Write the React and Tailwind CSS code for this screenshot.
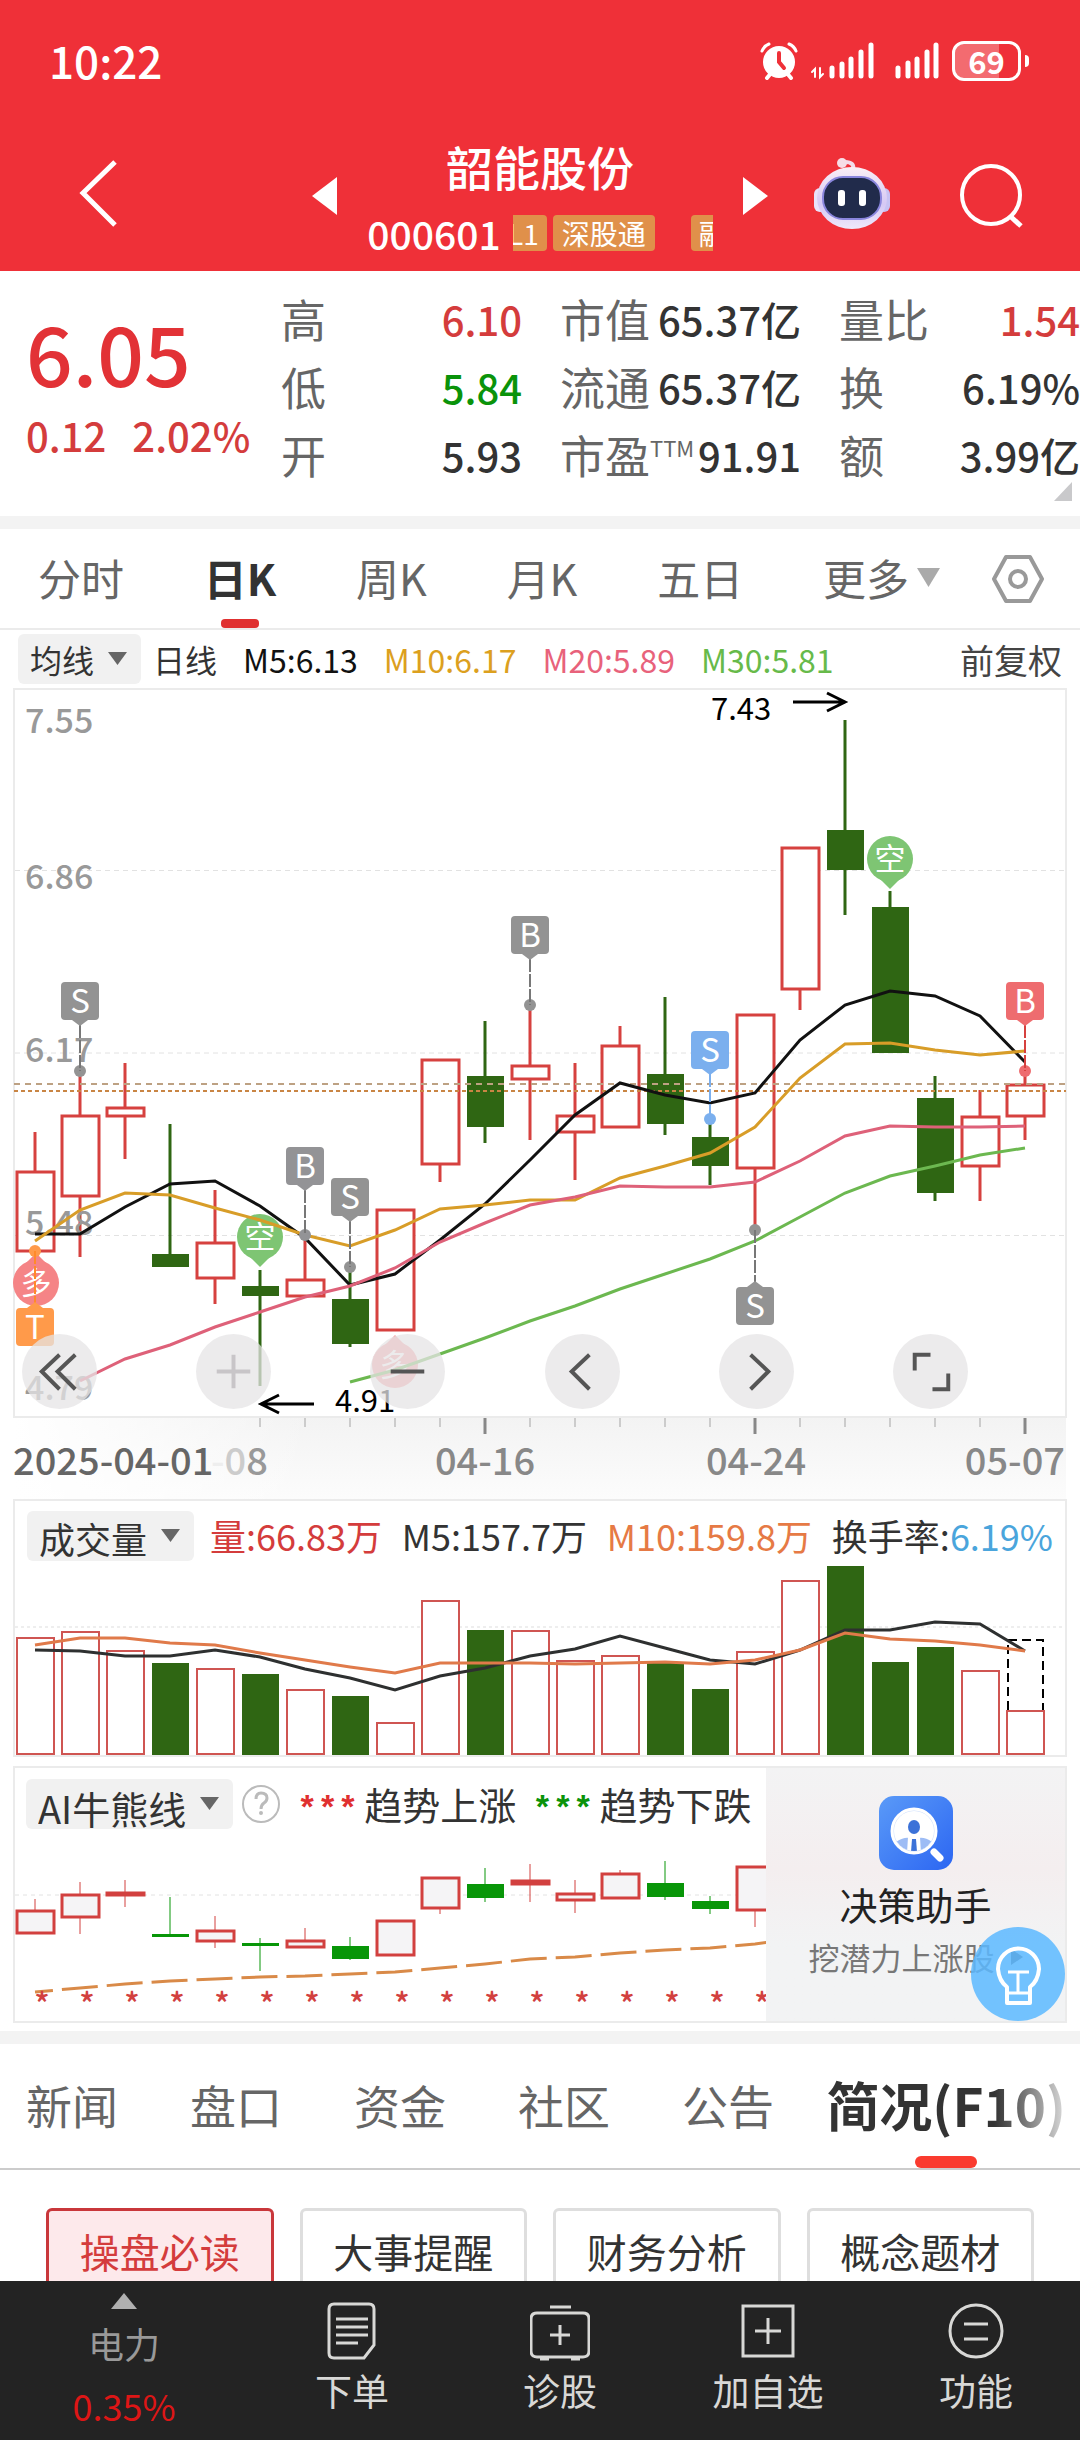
import { useState } from "react";

// x of the candle with index i, shared by the three charts
const cx = (i) => 35 + i * 45;
const points = (ys, from = 0) => ys.map((y, i) => `${cx(i + from)},${y}`).join(" ");

// [up, high, top, bottom, low]
const candles = [
  [1, 1132, 1172, 1251, 1251],
  [1, 1071, 1116, 1196, 1257],
  [1, 1063, 1108, 1116, 1159],
  [0, 1124, 1254, 1267, 1267],
  [1, 1190, 1243, 1278, 1304],
  [0, 1270, 1286, 1296, 1386],
  [1, 1236, 1280, 1296, 1296],
  [0, 1267, 1299, 1344, 1347],
  [1, 1210, 1210, 1330, 1330],
  [1, 1060, 1060, 1164, 1182],
  [0, 1021, 1076, 1127, 1143],
  [1, 1005, 1066, 1079, 1140],
  [1, 1063, 1116, 1132, 1180],
  [1, 1026, 1046, 1127, 1127],
  [0, 997, 1074, 1124, 1135],
  [0, 1119, 1137, 1166, 1185],
  [1, 1015, 1015, 1168, 1230],
  [1, 848, 848, 989, 1010],
  [0, 720, 830, 870, 915],
  [0, 891, 907, 1053, 1053],
  [0, 1076, 1098, 1193, 1201],
  [1, 1090, 1117, 1166, 1201],
  [1, 1071, 1085, 1116, 1140],
];

const ma5 = [1234, 1234, 1207, 1184, 1181, 1206, 1238, 1285, 1274, 1240, 1204, 1160, 1115, 1083, 1095, 1103, 1093, 1040, 1005, 991, 996, 1016, 1062];
const ma10 = [1241, 1210, 1193, 1195, 1208, 1220, 1235, 1246, 1230, 1209, 1205, 1200, 1200, 1178, 1166, 1153, 1127, 1078, 1044, 1043, 1050, 1055, 1051];
const ma20 = [1381, 1359, 1345, 1327, 1312, 1297, 1286, 1268, 1242, 1223, 1205, 1197, 1186, 1187, 1187, 1182, 1161, 1136, 1126, 1127, 1127, 1126];
const ma30 = [1382, 1370, 1354, 1338, 1321, 1306, 1289, 1274, 1259, 1241, 1217, 1193, 1176, 1166, 1155, 1148];

// [up, top]
const volumes = [
  [1, 1638], [1, 1632], [1, 1651], [0, 1663], [1, 1669], [0, 1674], [1, 1690], [0, 1696],
  [1, 1723], [1, 1601], [0, 1630], [1, 1631], [1, 1661], [1, 1656], [0, 1663], [0, 1689],
  [1, 1652], [1, 1581], [0, 1566], [0, 1662], [0, 1647], [1, 1671], [1, 1711],
];
const vol5 = [1650, 1651, 1656, 1656, 1650, 1657, 1669, 1678, 1690, 1676, 1668, 1656, 1649, 1636, 1648, 1660, 1664, 1650, 1630, 1630, 1622, 1624, 1651];
const vol10 = [1645, 1638, 1638, 1643, 1645, 1653, 1660, 1667, 1673, 1663, 1663, 1663, 1664, 1663, 1662, 1664, 1660, 1650, 1633, 1639, 1641, 1645, 1651];

const trend = [
  [1, 1899, 1911, 1933, 1933],
  [1, 1882, 1895, 1917, 1934],
  [1, 1880, 1893, 1895, 1907],
  [0, 1897, 1934, 1937, 1937],
  [1, 1916, 1931, 1941, 1948],
  [0, 1938, 1943, 1946, 1971],
  [1, 1928, 1941, 1947, 1947],
  [0, 1937, 1946, 1959, 1960],
  [1, 1921, 1921, 1955, 1955],
  [1, 1878, 1878, 1908, 1914],
  [0, 1868, 1884, 1898, 1902],
  [1, 1864, 1881, 1884, 1902],
  [1, 1880, 1894, 1900, 1913],
  [1, 1870, 1874, 1898, 1898],
  [0, 1861, 1883, 1897, 1900],
  [0, 1896, 1901, 1909, 1914],
  [1, 1867, 1867, 1910, 1927],
];
const trendLine = [1992, 1988, 1984, 1981, 1979, 1977, 1976, 1974, 1972, 1968, 1964, 1959, 1957, 1953, 1950, 1948, 1944, 1938];

const quotes = [
  [
    { label: "高", value: "6.10", color: "text-[#d43c3c]" },
    { label: "低", value: "5.84", color: "text-[#0a930a]" },
    { label: "开", value: "5.93", color: "text-[#333]" },
  ],
  [
    { label: "市值", value: "65.37亿", color: "text-[#333]" },
    { label: "流通", value: "65.37亿", color: "text-[#333]" },
    { label: "市盈", sup: "TTM", value: "91.91", color: "text-[#333]" },
  ],
  [
    { label: "量比", value: "1.54", color: "text-[#d43c3c]" },
    { label: "换", value: "6.19%", color: "text-[#333]" },
    { label: "额", value: "3.99亿", color: "text-[#333]" },
  ],
];

function Caret({ className }) {
  return (
    <svg viewBox="0 0 20 18" preserveAspectRatio="none" className={className} aria-hidden="true">
      <path d="M0 0h20L10 18z" fill="currentColor" />
    </svg>
  );
}

function PillSelect({ label, value, className }) {
  return (
    <div className="relative shrink-0">
      <select
        aria-label={label}
        className={`block h-[50px] appearance-none rounded-md bg-[#f1f1f1] pl-3 pr-[46px] text-[#333] ${className}`}
      >
        <option>{value}</option>
      </select>
      <Caret className="pointer-events-none absolute right-[14px] top-[18px] h-[13px] w-[19px] text-[#666]" />
    </div>
  );
}

function StatusBar() {
  return (
    <div className="flex h-16 items-center justify-between pl-[49px] pr-[51px]">
      <span className="text-[44px] font-medium leading-[62px]">10:22</span>
      <div className="flex items-center pt-[2px]">
        <svg viewBox="0 0 38 38" className="mr-3 h-[38px] w-[38px]" fill="none">
          <circle cx="19" cy="20" r="16" fill="#fff" />
          <path d="M7 36l5-6M31 36l-5-6" stroke="#fff" strokeWidth="4" strokeLinecap="round" />
          <path d="M2 9q2-5 7-7M36 9q-2-5-7-7" stroke="#fff" strokeWidth="3" strokeLinecap="round" />
          <path d="M19 11v9l5 6" stroke="#ef3038" strokeWidth="4" strokeLinecap="round" />
        </svg>
        <svg viewBox="0 0 64 38" className="mr-5 h-[38px] w-16" fill="none" stroke="#fff" strokeLinecap="round">
          <path d="M5 35V27l-3 3M10 26v9l3-3" strokeWidth="2" />
          <path d="M22 34v-8M32 34V22M41 34V17M51 34V10M61 34V3" strokeWidth="5" />
        </svg>
        <svg viewBox="0 0 46 38" className="mr-3 h-[38px] w-[46px]" fill="none" stroke="#fff" strokeLinecap="round">
          <path d="M4 34v-8M14 34V21M23 34V17M33 34V10M42 34V3" strokeWidth="5" />
        </svg>
        <div className="flex items-center">
          <div className="flex h-10 w-[69px] items-center justify-center rounded-xl border-[3px] border-white bg-linear-to-r from-[#f36b70] from-70% to-[#ef3038] to-70% text-[31px] font-bold leading-8">
            69
          </div>
          <div className="ml-1 h-3 w-1 rounded-r bg-white" />
        </div>
      </div>
    </div>
  );
}

function Robot() {
  return (
    <svg viewBox="0 0 76 72" className="h-[72px] w-[76px]">
      <defs>
        <linearGradient id="shell" x1="0" y1="0" x2="0" y2="1">
          <stop offset="0" stopColor="#fbeff6" />
          <stop offset="0.6" stopColor="#d5c8f4" />
          <stop offset="1" stopColor="#efe9fb" />
        </linearGradient>
      </defs>
      <path d="M39 12q2-8-8-8" fill="none" stroke="#f3dcea" strokeWidth="4" strokeLinecap="round" />
      <circle cx="28" cy="5" r="5" fill="#f7dde6" />
      <rect x="0" y="30" width="12" height="24" rx="6" fill="#e9e2fa" />
      <rect x="64" y="30" width="12" height="24" rx="6" fill="#c7c2f3" />
      <ellipse cx="38" cy="40" rx="35" ry="31" fill="url(#shell)" />
      <rect x="9" y="19" width="58" height="42" rx="20" fill="#212b4b" stroke="#8a86dd" strokeWidth="2" />
      <rect x="24" y="32" width="7" height="16" rx="3" fill="#fff" />
      <rect x="45" y="32" width="7" height="16" rx="3" fill="#fff" />
    </svg>
  );
}

function Header() {
  return (
    <header className="bg-[#ef3038] pb-[7px] pt-7 text-white">
      <StatusBar />
      <div className="mt-9 grid h-[136px] grid-cols-[1fr_auto_1fr] items-center">
        <div className="pl-[78px]">
          <button aria-label="返回" className="block pb-1">
            <svg viewBox="0 0 40 68" className="h-[68px] w-10" fill="none" stroke="#fff" strokeWidth="5">
              <path d="M37 2L5 33l32 32" />
            </svg>
          </button>
        </div>
        <div className="flex w-[456px] items-center justify-between">
          <button aria-label="上一只">
            <svg viewBox="0 0 25 38" className="h-[38px] w-[25px]"><path d="M25 0v38L0 19z" fill="#fff" /></svg>
          </button>
          <div className="flex flex-col items-center gap-[22px] pb-[2px]">
            <h1 className="text-[47px] font-medium leading-[54px]">韶能股份</h1>
            <div className="flex h-9 items-center gap-3">
              <span className="text-[39px] font-medium leading-9">000601</span>
              <div className="flex w-[200px] justify-end overflow-hidden text-[28px] leading-9">
                <span className="mr-[6px] shrink-0 rounded-sm bg-[#e0904a] px-2">L1</span>
                <span className="mr-9 shrink-0 rounded-sm bg-[#e0904a] px-[9px]">深股通</span>
                <span className="w-[22px] shrink-0 overflow-hidden whitespace-nowrap rounded-l-sm bg-[#e0904a] pl-2">融</span>
              </div>
            </div>
          </div>
          <button aria-label="下一只">
            <svg viewBox="0 0 25 38" className="h-[38px] w-[25px]"><path d="M0 0v38l25-19z" fill="#fff" /></svg>
          </button>
        </div>
        <div className="flex items-center justify-end gap-[70px] pr-14">
          <button aria-label="智能助手" className="pb-1"><Robot /></button>
          <button aria-label="搜索">
            <svg viewBox="0 0 64 64" className="h-16 w-16" fill="none" stroke="#fff" strokeWidth="4">
              <circle cx="31" cy="31" r="29" />
              <path d="M50 52l11 10" strokeWidth="5" />
            </svg>
          </button>
        </div>
      </div>
    </header>
  );
}

function Quote() {
  return (
    <section className="relative flex h-[245px] pt-[14px]">
      <div className="w-[281px] shrink-0 pl-[26px] font-medium">
        <div className="pt-5 text-[82px] leading-[94px] text-[#e23236]">6.05</div>
        <div className="flex gap-[26px] pt-[10px] text-[40px] leading-[52px] text-[#d43c3c]">
          <span>0.12</span>
          <span>2.02%</span>
        </div>
      </div>
      <div className="grid flex-1 grid-cols-3 gap-[38px]">
        {quotes.map((col, i) => (
          <dl key={i}>
            {col.map((q) => (
              <div key={q.label} className="flex h-[68px] items-center justify-between whitespace-nowrap">
                <dt className="flex text-[45px] leading-[68px] text-[#666]">
                  {q.label}
                  {q.sup && <span className="text-[22px] leading-[52px]">{q.sup}</span>}
                </dt>
                <dd className={`text-[40px] font-medium leading-[68px] ${q.color}`}>{q.value}</dd>
              </div>
            ))}
          </dl>
        ))}
      </div>
      <svg viewBox="0 0 18 19" className="absolute bottom-[15px] right-2 h-[19px] w-[18px]">
        <path d="M18 0v19H0z" fill="#c9c9cb" />
      </svg>
    </section>
  );
}

function PeriodTabs() {
  const [active, setActive] = useState("日K");
  return (
    <nav className="flex h-[101px] items-center border-b-2 border-[#ebebeb] pl-[38px] pr-9">
      <div className="mr-[52px] flex flex-1 justify-between self-stretch text-[43px]">
        {["分时", "日K", "周K", "月K", "五日"].map((t) => (
          <button
            key={t}
            onClick={() => setActive(t)}
            className={`relative pb-[2px] leading-[97px] ${active === t ? "font-bold text-[#333]" : "text-[#666]"}`}
          >
            {t}
            {active === t && (
              <span className="absolute bottom-0 left-1/2 h-[9px] w-[38px] -translate-x-1/2 rounded bg-[#e03030]" />
            )}
          </button>
        ))}
        <button className="flex items-center gap-2 pb-[2px] leading-[97px] text-[#666]">
          更多
          <Caret className="h-[19px] w-[23px] text-[#aaa]" />
        </button>
      </div>
      <button aria-label="设置">
        <svg viewBox="0 0 52 48" className="h-12 w-[52px]" fill="none" stroke="#999" strokeWidth="4" strokeLinejoin="round">
          <path d="M14 2h24l12 22-12 22H14L2 24z" />
          <circle cx="26" cy="24" r="8" />
        </svg>
      </button>
    </nav>
  );
}

function Candle({ i, data, up, down, fill = "#fff", wick = 3 }) {
  const [rise, high, top, bottom, low] = data;
  const color = rise ? up : down;
  return (
    <g>
      <path d={`M${cx(i)} ${high}V${top}M${cx(i)} ${bottom}V${low}`} stroke={color} strokeWidth={wick} />
      {rise ? (
        <rect x={cx(i) - 18} y={top} width="37" height={bottom - top} fill={fill} stroke={color} strokeWidth="3" />
      ) : (
        <rect x={cx(i) - 18} y={top} width="37" height={bottom - top} fill={color} />
      )}
    </g>
  );
}

// square B/S/T flag joined to a dot at the candle's high or low
function Flag({ i, letter, y, dot, color, below, line = "#777" }) {
  const x = cx(i);
  return (
    <g>
      <circle cx={x} cy={dot} r="6" fill={color} />
      <path d={below ? `M${x} ${dot}V${y - 5}` : `M${x} ${y + 43}V${dot}`} stroke={line} strokeWidth="2" strokeDasharray="13 2" />
      <rect x={x - 19} y={y} width="38" height="38" rx="4" fill={color} />
      <path d={below ? `M${x - 8} ${y}l8 -6 8 6z` : `M${x - 8} ${y + 38}l8 6 8 -6z`} fill={color} />
      <text x={x} y={y + 31} textAnchor="middle" fontSize="33" fill="#fff">{letter}</text>
    </g>
  );
}

function Balloon({ x, y, text, color, up, opacity = 1 }) {
  return (
    <g opacity={opacity}>
      <circle cx={x} cy={y} r="23" fill={color} />
      <path d={up ? `M${x - 11} ${y - 19}L${x} ${y - 30}l11 11z` : `M${x - 11} ${y + 19}L${x} ${y + 30}l11 -11z`} fill={color} />
      <text x={x} y={y + 11} textAnchor="middle" fontSize="31" fill="#fff">{text}</text>
    </g>
  );
}

function PriceChart() {
  return (
    <svg viewBox="0 688 1080 811" className="block w-full" role="img" aria-label="日K线">
      <defs>
        <linearGradient id="axis" x1="0" y1="0" x2="0" y2="1">
          <stop offset="0" stopColor="#f3f3f3" />
          <stop offset="1" stopColor="#fcfcfc" />
        </linearGradient>
        <linearGradient id="axisLeft" x1="0" y1="0" x2="1" y2="0">
          <stop offset="0" stopColor="#fff" />
          <stop offset="1" stopColor="#fff" stopOpacity="0" />
        </linearGradient>
      </defs>
      <rect x="14" y="1417" width="1052" height="82" fill="url(#axis)" />
      <rect x="14" y="1417" width="300" height="82" fill="url(#axisLeft)" />
      <rect x="14" y="689" width="1052" height="728" fill="#fff" stroke="#ebebeb" strokeWidth="2" />
      <path d="M15 870.5H1065M15 1053H1065M15 1235.5H1065" stroke="#e2e2e2" strokeDasharray="5 4" />

      {candles.map((c, i) => (
        <Candle key={i} i={i} data={c} up="#d6413f" down="#2f6613" />
      ))}
      <path d="M14 1084H1066" stroke="#bda183" strokeWidth="2" strokeDasharray="6 5" />
      <path d="M14 1091H1066" stroke="#c98544" strokeWidth="2" strokeDasharray="4 3" />

      <g fontSize="34" fontWeight="500" fill="#999">
        <text x="25" y="733">7.55</text>
        <text x="25" y="889">6.86</text>
        <text x="25" y="1062">6.17</text>
        <text x="25" y="1235">5.48</text>
        <text x="25" y="1400">4.79</text>
      </g>

      <Balloon x={36} y={1283} text="多" color="#f58486" up />
      <Balloon x={260} y={1237} text="空" color="#7ec573" />
      <Balloon x={395} y={1365} text="多" color="#f58486" up opacity={0.8} />
      <Balloon x={890} y={859} text="空" color="#7ec573" />

      <g fill="none" strokeWidth="3">
        <polyline points={points(ma5)} stroke="#111" />
        <polyline points={points(ma10)} stroke="#d89d28" />
        <polyline points={points(ma20, 1)} stroke="#de6179" />
        <polyline points={points(ma30, 7)} stroke="#6cb850" />
      </g>

      <Flag i={1} letter="S" y={982} dot={1071} color="#939393" />
      <Flag i={6} letter="B" y={1147} dot={1235} color="#939396" />
      <Flag i={7} letter="S" y={1178} dot={1267} color="#939393" />
      <Flag i={11} letter="B" y={916} dot={1005} color="#939393" />
      <Flag i={15} letter="S" y={1031} dot={1119} color="#7bafee" line="#7bafee" />
      <Flag i={16} letter="S" y={1287} dot={1230} color="#939393" below />
      <Flag i={22} letter="B" y={982} dot={1071} color="#ee6c6f" line="#d6413f" />
      <Flag i={0} letter="T" y={1308} dot={1251} color="#ff9a4a" line="#ff8a2a" below />

      <g fill="none" stroke="#000" strokeWidth="3">
        <path d="M793 702h52M827 693l18 9-18 9" />
        <path d="M314 1404h-53M279 1395l-18 9 18 9" />
      </g>
      <text x="711" y="720" fontSize="31">7.43</text>
      <text x="335" y="1412" fontSize="31">4.91</text>

      {candles.map((c, i) =>
        i < 5 ? null : i === 10 || i === 16 || i === 22 ? (
          <path key={i} d={`M${cx(i)} 1418v16`} stroke="#888" strokeWidth="3" />
        ) : (
          <path key={i} d={`M${cx(i)} 1418v9`} stroke="#ccc" strokeWidth="2" />
        )
      )}
      <g fontSize="38" fontWeight="500" fill="#888">
        <text x="13" y="1475" fill="#666">2025-04-01</text>
        <text x="211" y="1475">
          <tspan fill="#eee">-</tspan>
          <tspan fill="#ccc">0</tspan>
          <tspan fill="#999">8</tspan>
        </text>
        <text x="485" y="1475" textAnchor="middle">04-16</text>
        <text x="756" y="1475" textAnchor="middle">04-24</text>
        <text x="1065" y="1475" textAnchor="end">05-07</text>
      </g>
    </svg>
  );
}

const controls = [
  { name: "最左", d: "M38 21L20 38l18 18M54 21L36 38l18 18", stroke: "#555" },
  { name: "放大", d: "M21 38h34M38 21v34", stroke: "#c8c5c8" },
  { name: "缩小", d: "M21 38h34", stroke: "#555" },
  { name: "左移", d: "M45 21L27 38l18 18", stroke: "#555" },
  { name: "右移", d: "M32 21l18 17-18 18", stroke: "#555" },
  { name: "全屏", d: "M38 21H22v16M56 40v16H40", stroke: "#555" },
];

function PriceSection() {
  return (
    <section>
      <div className="flex h-[58px] items-center pl-[18px] pr-[18px] text-[32px]">
        <PillSelect label="主图指标" value="均线" className="text-[32px]" />
        <div className="flex flex-1 items-center">
          <span className="ml-3 text-[#333]">日线</span>
          <span className="ml-[26px] text-[#111]">M5:6.13</span>
          <span className="ml-[26px] text-[#dca01e]">M10:6.17</span>
          <span className="ml-[26px] text-[#e8627b]">M20:5.89</span>
          <span className="ml-[26px] text-[#67ba4a]">M30:5.81</span>
          <button className="ml-auto text-[34px] text-[#444]">前复权</button>
        </div>
      </div>
      <div className="relative">
        <PriceChart />
        <div className="absolute inset-x-0 bottom-[90px] flex justify-between pl-[22px] pr-[112px]">
          {controls.map((c) => (
            <button key={c.name} aria-label={c.name} className="size-[75px] rounded-full bg-[#e6e4e6]/75">
              <svg viewBox="0 0 76 76" fill="none" stroke={c.stroke} strokeWidth="4"><path d={c.d} /></svg>
            </button>
          ))}
        </div>
      </div>
    </section>
  );
}

function VolumeSection() {
  return (
    <section className="mx-[13px] border-2 border-[#ebebeb]">
      <div className="flex h-[65px] items-center pl-3 pr-3 pt-1 text-[36px]">
        <PillSelect label="副图指标" value="成交量" className="text-[36px]" />
        <div className="flex flex-1 items-center justify-between pb-[2px] pl-4">
          <span className="text-[#d43c3c]">量:66.83万</span>
          <span className="text-[#333]">M5:157.7万</span>
          <span className="text-[#e67a45]">M10:159.8万</span>
          <span className="text-[#333]">换手率:<span className="text-[#4aa5dc]">6.19%</span></span>
        </div>
      </div>
      <svg viewBox="15 1566 1050 189" className="block w-full" role="img" aria-label="成交量">
        <path d="M15 1627H1065" stroke="#ddd" strokeDasharray="3 3" />
        {volumes.map(([up, top], i) =>
          up ? (
            <rect key={i} x={cx(i) - 18} y={top} width="37" height={1754 - top} fill="#fff" stroke="#cf5552" strokeWidth="2" />
          ) : (
            <rect key={i} x={cx(i) - 18} y={top} width="37" height={1755 - top} fill="#2f6613" />
          )
        )}
        <path d="M1008 1710V1640h35v70" fill="none" stroke="#000" strokeWidth="2" strokeDasharray="9 5" />
        <polyline points={points(vol5)} fill="none" stroke="#2e3030" strokeWidth="3" />
        <polyline points={points(vol10)} fill="none" stroke="#e07a4a" strokeWidth="3" />
      </svg>
    </section>
  );
}

function Assistant() {
  return (
    <a
      href="#assistant"
      className="flex w-[299px] shrink-0 flex-col items-center bg-linear-to-b from-[#f3f3f4] via-[#f4eeef] via-40% to-[#f2f3f4] to-70% pt-7"
    >
      <svg viewBox="0 0 74 74" className="size-[74px]">
        <defs>
          <linearGradient id="tile" x1="0" y1="0" x2="1" y2="1">
            <stop offset="0" stopColor="#5a9af8" />
            <stop offset="1" stopColor="#2c66f2" />
          </linearGradient>
          <clipPath id="lens"><circle cx="35" cy="35" r="20" /></clipPath>
        </defs>
        <rect width="74" height="74" rx="15" fill="url(#tile)" />
        <circle cx="35" cy="35" r="22" fill="#cfe0fc" stroke="#fff" strokeWidth="3" />
        <g clipPath="url(#lens)">
          <path d="M15 15h40v40H15z" fill="#fff" />
          <path d="M17 58V46q8-5 13-4l5 4 5-4q6-1 13 4v12z" fill="#9dbcf5" />
          <path d="M29 41l6 3 6-3 1 16H28z" fill="#fff" />
          <path d="M33 43h4l1 13h-6z" fill="#3c72d8" />
        </g>
        <ellipse cx="35" cy="31" rx="6" ry="7" fill="#3c72d8" />
        <path d="M55 56l6 6" stroke="#fff" strokeWidth="7" strokeLinecap="round" />
      </svg>
      <span className="mt-2 text-[38px] leading-[52px] text-[#222]">决策助手</span>
      <span className="mt-1 flex items-center gap-4 text-[31px] leading-[46px] text-[#777]">
        挖潜力上涨股
        <svg viewBox="0 0 12 16" className="h-4 w-3"><path d="M0 0l12 8-12 8z" fill="#666" /></svg>
      </span>
    </a>
  );
}

function TrendSection() {
  return (
    <section className="relative mx-[13px] mb-2 mt-[9px] flex border-2 border-[#ebebeb]">
      <div className="min-w-0 flex-1">
        <div className="flex h-[72px] items-center whitespace-nowrap pl-[11px] text-[38px] text-[#333]">
          <PillSelect label="智能指标" value="AI牛熊线" className="text-[38px]" />
          <button aria-label="说明" className="ml-2 shrink-0">
            <svg viewBox="0 0 40 40" className="size-10" fill="none" stroke="#bbb" strokeWidth="2">
              <circle cx="20" cy="20" r="18" />
              <path d="M15 15q0-6 5-6 6 0 6 5 0 3-3 5-3 2-3 6" strokeWidth="3" />
              <circle cx="20" cy="29" r="1" strokeWidth="2" />
            </svg>
          </button>
          <span className="ml-4 pt-3 font-[Liberation_Mono] text-[34px] font-bold leading-[38px] text-[#e03030]">***</span>
          <span className="ml-[6px] pb-[2px]">趋势上涨</span>
          <span className="ml-4 pt-3 font-[Liberation_Mono] text-[34px] font-bold leading-[38px] text-[#0a930a]">***</span>
          <span className="ml-[6px] pb-[2px]">趋势下跌</span>
        </div>
        <svg viewBox="15 1840 751 181" className="block w-full" role="img" aria-label="AI牛熊线">
          <path d="M15 1895H766" stroke="#e2e2e2" strokeDasharray="4 4" />
          {trend.map((c, i) => (
            <Candle key={i} i={i} data={c} up="#d2403f" down="#089608" fill="#f5f4f6" wick={1} />
          ))}
          <polyline
            points={points(trendLine)}
            fill="none"
            stroke="#d98a48"
            strokeWidth="3"
            strokeDasharray="36 9"
            strokeDashoffset="18"
          />
          {trend.map((c, i) => (
            <text key={i} x={cx(i) + 7} y="2016" textAnchor="middle" fontSize="32" fontWeight="500" fill="#d2403f">*</text>
          ))}
        </svg>
      </div>
      <Assistant />
      <button aria-label="提示" className="absolute bottom-0 right-0 size-[94px] rounded-full bg-[#5cb9ff]/85">
        <svg viewBox="0 0 94 94" fill="none" stroke="#fff" strokeWidth="4" strokeLinejoin="round">
          <path d="M36 76V60q-8-6-9-18a20 20 0 0 1 41 0q-1 12-9 18v16z" />
          <path d="M36 66h23M37 45h21M47 45v21" strokeWidth="3" />
        </svg>
      </button>
    </section>
  );
}

function InfoTabs() {
  return (
    <nav className="flex h-[126px] items-center justify-between whitespace-nowrap border-b-2 border-[#ccc] pl-[26px] pr-[14px] text-[46px] text-[#666]">
      <div className="flex gap-[72px] pb-1">
        {["新闻", "盘口", "资金", "社区", "公告"].map((t) => (
          <button key={t}>{t}</button>
        ))}
      </div>
      <button className="relative pb-1 text-[53px] font-bold leading-[120px]">
        <span className="bg-linear-to-r from-[#333] from-70% to-[#ddd] bg-clip-text text-transparent">简况(F10)</span>
        <span className="absolute bottom-0 left-1/2 h-3 w-[62px] -translate-x-1/2 rounded-md bg-[#fa3b2f]" />
      </button>
    </nav>
  );
}

function BottomBar() {
  const items = [
    {
      label: "下单",
      icon: <path d="M10 3h35q5 0 5 5v36L40 57H10q-5 0-5-5V8q0-5 5-5zM12 18h32M12 26h32M12 34h32M12 42h22" />,
    },
    {
      label: "诊股",
      icon: <path d="M18 6h21M5 12h46q6 0 6 6v32q0 6-6 6H5q-6 0-6-6V18q0-6 6-6zM28 24v20M18 34h20M8 58h9M39 58h9" />,
    },
    { label: "加自选", icon: <path d="M3 5h50v50H3zM28 17v26M15 30h26" /> },
    { label: "功能", icon: <path d="M28 4a26 26 0 1 1 0 52 26 26 0 1 1 0-52zM16 23h24M16 38h24" /> },
  ];
  return (
    <footer className="fixed inset-x-0 bottom-0 flex h-[159px] bg-[#232323] text-[37px] text-[#d8d8d6]">
      <button className="flex w-[248px] flex-col items-center pt-3 text-[36px] text-[#999]">
        <svg viewBox="0 0 26 16" className="h-4 w-[26px]"><path d="M13 0l13 16H0z" fill="#b0b0b0" /></svg>
        <span className="mt-[10px] leading-[48px]">电力</span>
        <span className="mt-3 leading-[52px] text-[#dd1616]">0.35%</span>
      </button>
      {items.map((it) => (
        <button key={it.label} className="flex flex-1 flex-col items-center pt-5">
          <svg viewBox="-2 0 60 60" className="size-[60px]" fill="none" stroke="currentColor" strokeWidth="3">
            {it.icon}
          </svg>
          <span className="mt-1 leading-[50px]">{it.label}</span>
        </button>
      ))}
    </footer>
  );
}

export default function App() {
  const [report, setReport] = useState("操盘必读");
  return (
    <div className="min-h-screen overflow-hidden bg-white font-['Noto_Sans_CJK_SC',sans-serif]">
      <Header />
      <Quote />
      <div className="h-[13px] bg-[#f3f3f3]" />
      <PeriodTabs />
      <PriceSection />
      <VolumeSection />
      <TrendSection />
      <div className="h-[13px] bg-[#f3f3f3]" />
      <InfoTabs />
      <div className="grid grid-cols-4 gap-[26px] px-[46px] pt-[38px]">
        {["操盘必读", "大事提醒", "财务分析", "概念题材"].map((t) => (
          <button
            key={t}
            onClick={() => setReport(t)}
            className={`h-[86px] rounded-md border-[3px] text-[40px] leading-[78px] ${
              report === t ? "border-[#c9373b] bg-[#fde9eb] text-[#d43c3c]" : "border-[#dedede] text-[#333]"
            }`}
          >
            {t}
          </button>
        ))}
      </div>
      <BottomBar />
    </div>
  );
}
